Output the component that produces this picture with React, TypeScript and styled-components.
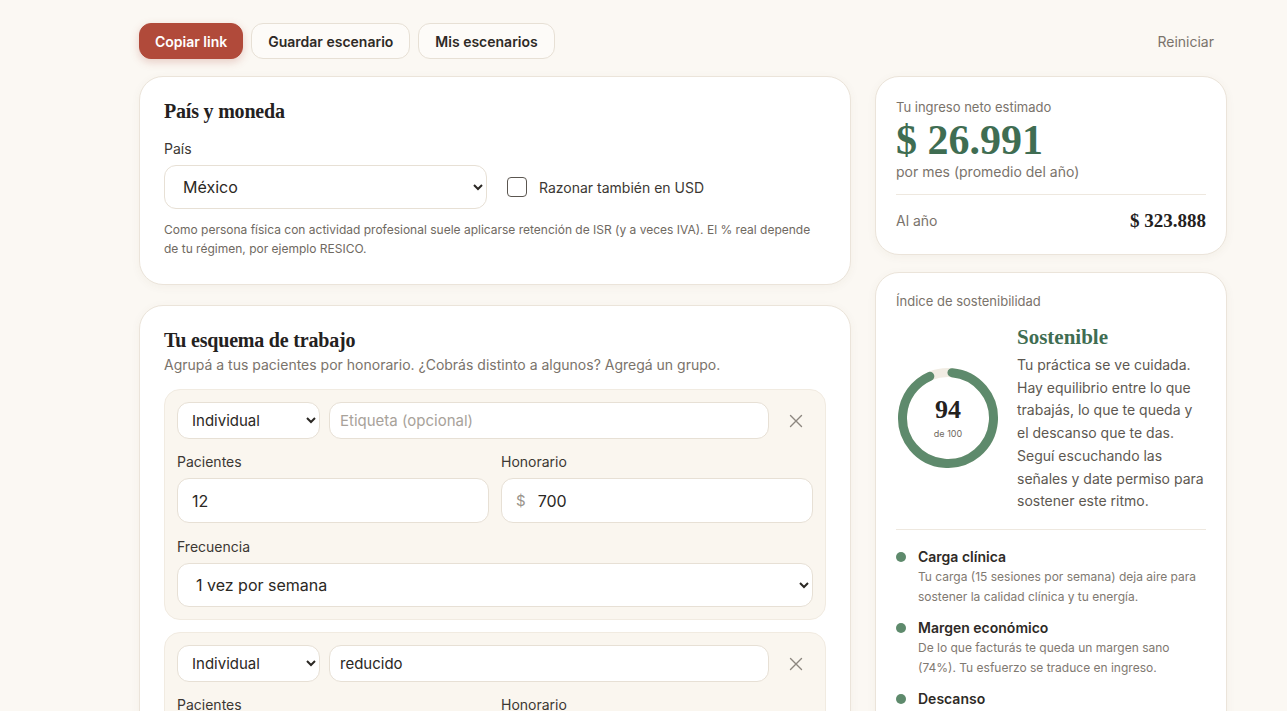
import React from 'react';
import styled, { createGlobalStyle } from 'styled-components';

const GlobalStyle = createGlobalStyle`
  * { box-sizing: border-box; }
  html, body { margin: 0; padding: 0; }
  body {
    background: #fbf8f3;
    font-family: Inter, 'Noto Sans', sans-serif;
    color: #2b2824;
  }
`;

const Page = styled.div`
  width: 1088px;
  margin-left: 139px;
  padding-top: 23px;
`;

const TopBar = styled.div`
  display: flex;
  align-items: center;
  gap: 8px;
  margin-bottom: 17px;
`;

const Btn = styled.button<{ $primary?: boolean }>`
  height: 36px;
  padding: 0 ${(p) => (p.$primary ? 15 : 16)}px;
  border-radius: 12px;
  font-family: Inter, sans-serif;
  font-size: 14px;
  font-weight: 600;
  cursor: pointer;
  border: 1px solid ${(p) => (p.$primary ? '#b14a3a' : '#e7e0d5')};
  background: ${(p) => (p.$primary ? '#b14a3a' : '#fdfbf8')};
  color: ${(p) => (p.$primary ? '#fff' : '#2e2a26')};
  box-shadow: ${(p) => (p.$primary ? '0 3px 8px rgba(177,74,58,0.25)' : 'none')};
`;

const GhostBtn = styled.button`
  margin-left: auto;
  height: 36px;
  padding: 0 13px;
  border: none;
  background: none;
  font-family: Inter, sans-serif;
  font-size: 14px;
  color: #7a736b;
`;

const Columns = styled.div`
  display: grid;
  grid-template-columns: 712px 352px;
  gap: 24px;
  align-items: start;
`;

const Stack = styled.div<{ $gap: number }>`
  display: flex;
  flex-direction: column;
  gap: ${(p) => p.$gap}px;
`;

const Card = styled.section<{ $pad?: string }>`
  background: #fff;
  border: 1px solid #ebe4da;
  border-radius: 24px;
  padding: ${(p) => p.$pad || '21px 24px 26px'};
  box-shadow: 0 2px 10px rgba(90, 70, 40, 0.05);
`;

const Heading = styled.h2`
  margin: 0;
  font-family: 'Liberation Serif', 'DejaVu Serif', serif;
  font-size: 20px;
  font-weight: 700;
  letter-spacing: -0.2px;
  color: #24211e;
  line-height: 26px;
`;

const Sub = styled.p`
  margin: 2px 0 14px;
  font-size: 14px;
  color: #7a736b;
  line-height: 20px;
`;

const Label = styled.div<{ $top?: number }>`
  font-size: 14px;
  color: #3c3833;
  margin-top: ${(p) => p.$top || 0}px;
  margin-bottom: 7px;
  line-height: 18px;
`;

const FieldRow = styled.div`
  display: flex;
  align-items: center;
  gap: 20px;
`;

const Select = styled.select<{ $w?: number; $h?: number; $fs?: number }>`
  width: ${(p) => (p.$w ? `${p.$w}px` : '100%')};
  height: ${(p) => p.$h || 44}px;
  border: 1px solid #e7e0d5;
  border-radius: 12px;
  background: #fff;
  padding: 0 10px 0 ${(p) => (p.$fs && p.$fs < 16 ? 10 : 14)}px;
  font-family: Inter, sans-serif;
  font-size: ${(p) => p.$fs || 16}px;
  color: #2b2824;
  outline: none;
`;

const CheckLabel = styled.label`
  display: flex;
  align-items: center;
  gap: 12px;
  font-size: 14px;
  color: #3c3833;
`;

const CheckBox = styled.span`
  width: 20px;
  height: 20px;
  border: 1.5px solid #5b5650;
  border-radius: 4px;
  background: #fff;
`;

const Note = styled.p`
  margin: 11px 0 0;
  font-size: 12px;
  line-height: 19px;
  color: #6f6961;
`;

const Group = styled.div`
  background: #faf6ef;
  border: 1px solid #f1ebe1;
  border-radius: 16px;
  padding: 12px;
  margin-bottom: 12px;
`;

const GroupHead = styled.div`
  display: flex;
  align-items: center;
  gap: 9px;
  margin-bottom: 14px;
`;

const TextInput = styled.input<{ $h?: number; $fs?: number; $pl?: number }>`
  flex: 1;
  min-width: 0;
  width: 100%;
  height: ${(p) => p.$h || 45}px;
  border: 1px solid #e7e0d5;
  border-radius: 12px;
  background: #fff;
  padding: 0 10px 0 ${(p) => p.$pl || 10}px;
  font-family: Inter, sans-serif;
  font-size: ${(p) => p.$fs || 16}px;
  color: #2b2824;
  outline: none;
  &::placeholder { color: #a8a29a; }
`;

const CloseBtn = styled.button`
  width: 35px;
  flex: none;
  height: 37px;
  border: none;
  background: none;
  display: flex;
  align-items: center;
  justify-content: center;
  color: #8d877f;
  padding: 0;
`;

const Grid2 = styled.div`
  display: grid;
  grid-template-columns: 1fr 1fr;
  gap: 12px;
  margin-bottom: 15px;
`;

const Money = styled.div`
  display: flex;
  align-items: center;
  height: 45px;
  border: 1px solid #e7e0d5;
  border-radius: 12px;
  background: #fff;
  padding: 0 14px;
  gap: 12px;
  font-size: 16px;
`;

const Prefix = styled.span`
  color: #9a948c;
  font-size: 15px;
`;

const Small = styled.div`
  font-size: 13px;
  color: #7a736b;
  line-height: 18px;
`;

const BigNum = styled.div`
  font-family: 'Liberation Serif', 'DejaVu Serif', serif;
  font-weight: 700;
  font-size: 42px;
  line-height: 46px;
  color: #3f6d52;
  margin-top: 1px;
`;

const Muted = styled.div`
  font-size: 14px;
  color: #7a736b;
  line-height: 18px;
`;

const Divider = styled.hr<{ $top?: number }>`
  border: none;
  border-top: 1px solid #eee8df;
  margin: ${(p) => p.$top ?? 13}px 0 0;
`;

const YearRow = styled.div`
  display: flex;
  justify-content: space-between;
  align-items: center;
  padding-top: 15px;
`;

const YearVal = styled.span`
  font-family: 'Liberation Serif', 'DejaVu Serif', serif;
  font-weight: 700;
  font-size: 19px;
  color: #24211e;
`;

const ScoreRow = styled.div`
  display: flex;
  align-items: center;
  gap: 18px;
  margin-top: 14px;
`;

const Ring = styled.div`
  position: relative;
  width: 102px;
  height: 102px;
  flex: none;
  margin-left: 1px;
`;

const RingCenter = styled.div`
  position: absolute;
  inset: 0;
  display: flex;
  flex-direction: column;
  align-items: center;
  justify-content: center;
`;

const RingNum = styled.div`
  font-family: 'Liberation Serif', 'DejaVu Serif', serif;
  font-weight: 700;
  font-size: 26px;
  line-height: 26px;
  color: #24211e;
`;

const RingOf = styled.div`
  font-size: 9px;
  color: #6f6961;
  margin-top: 5px;
`;

const ScoreTitle = styled.div`
  font-family: 'Liberation Serif', 'DejaVu Serif', serif;
  font-weight: 700;
  font-size: 21px;
  color: #3f6d52;
  line-height: 26px;
  margin-bottom: 4px;
`;

const ScoreText = styled.p`
  margin: 0;
  font-size: 14px;
  line-height: 22.7px;
  color: #5d5851;
`;

const List = styled.ul`
  list-style: none;
  margin: 17px 0 0;
  padding: 0;
  display: flex;
  flex-direction: column;
  gap: 11px;
`;

const Item = styled.li`
  position: relative;
  padding-left: 22px;
`;

const Dot = styled.span`
  position: absolute;
  left: 0;
  top: 5px;
  width: 10px;
  height: 10px;
  border-radius: 50%;
  background: #5e8a6c;
`;

const ItemTitle = styled.div`
  font-size: 14px;
  font-weight: 600;
  color: #2e2a26;
  line-height: 20px;
`;

const ItemText = styled.div`
  font-size: 12px;
  line-height: 20px;
  color: #7f7971;
`;

const XIcon = () => (
  <svg width="14" height="14" viewBox="0 0 14 14" fill="none" stroke="currentColor" strokeWidth="1.4" strokeLinecap="round">
    <path d="M1.5 1.5l11 11M12.5 1.5l-11 11" />
  </svg>
);

const ScoreRing = ({ value }: { value: number }) => {
  const r = 45.5;
  const c = 2 * Math.PI * r;
  return (
    <Ring>
      <svg width="102" height="102" viewBox="0 0 102 102">
        <circle cx="51" cy="51" r={r} fill="none" stroke="#f1ece3" strokeWidth="9" />
        <circle
          cx="51"
          cy="51"
          r={r}
          fill="none"
          stroke="#5e8a6c"
          strokeWidth="9"
          strokeLinecap="round"
          strokeDasharray={`${(c * value) / 100 - 6} ${c}`}
          transform="rotate(-85 51 51)"
        />
      </svg>
      <RingCenter>
        <RingNum>{value}</RingNum>
        <RingOf>de 100</RingOf>
      </RingCenter>
    </Ring>
  );
};

const WorkGroup = ({ label, last }: { label?: string; last?: boolean }) => (
  <Group>
    <GroupHead>
      <Select $w={143} $h={37} $fs={15} defaultValue="Individual">
        <option>Individual</option>
        <option>Pareja</option>
        <option>Grupal</option>
      </Select>
      <TextInput $h={37} $fs={15} placeholder="Etiqueta (opcional)" defaultValue={label} />
      <CloseBtn aria-label="Quitar">
        <XIcon />
      </CloseBtn>
    </GroupHead>
    <Grid2>
      <div>
        <Label>Pacientes</Label>
        <TextInput defaultValue="12" $pl={14} />
      </div>
      <div>
        <Label>Honorario</Label>
        <Money>
          <Prefix>$</Prefix>
          <span>700</span>
        </Money>
      </div>
    </Grid2>
    {!last && (
      <>
        <Label>Frecuencia</Label>
        <Select defaultValue="1 vez por semana">
          <option>1 vez por semana</option>
          <option>Cada 15 días</option>
        </Select>
      </>
    )}
  </Group>
);

export default function App() {
  return (
    <>
      <GlobalStyle />
      <Page>
        <TopBar>
          <Btn $primary>Copiar link</Btn>
          <Btn>Guardar escenario</Btn>
          <Btn>Mis escenarios</Btn>
          <GhostBtn>Reiniciar</GhostBtn>
        </TopBar>
        <Columns>
          <Stack $gap={20}>
            <Card>
              <Heading>País y moneda</Heading>
              <Label $top={16}>País</Label>
              <FieldRow>
                <Select $w={323} defaultValue="México">
                  <option>México</option>
                  <option>Argentina</option>
                </Select>
                <CheckLabel>
                  <CheckBox />
                  Razonar también en USD
                </CheckLabel>
              </FieldRow>
              <Note>
                Como persona física con actividad profesional suele aplicarse retención de ISR (y a veces IVA). El %
                real depende de tu régimen, por ejemplo RESICO.
              </Note>
            </Card>
            <Card>
              <Heading>Tu esquema de trabajo</Heading>
              <Sub>Agrupá a tus pacientes por honorario. ¿Cobrás distinto a algunos? Agregá un grupo.</Sub>
              <WorkGroup />
              <WorkGroup label="reducido" last />
            </Card>
          </Stack>
          <Stack $gap={17}>
            <Card $pad="21px 20px 22px">
              <Small>Tu ingreso neto estimado</Small>
              <BigNum>$ 26.991</BigNum>
              <Muted>por mes (promedio del año)</Muted>
              <Divider />
              <YearRow>
                <Muted>Al año</Muted>
                <YearVal>$ 323.888</YearVal>
              </YearRow>
            </Card>
            <Card $pad="19px 20px 20px">
              <Small>Índice de sostenibilidad</Small>
              <ScoreRow>
                <ScoreRing value={94} />
                <div>
                  <ScoreTitle>Sostenible</ScoreTitle>
                  <ScoreText>
                    Tu práctica se ve cuidada. Hay equilibrio entre lo que trabajás, lo que te queda y el descanso que te
                    das. Seguí escuchando las señales y date permiso para sostener este ritmo.
                  </ScoreText>
                </div>
              </ScoreRow>
              <Divider $top={16} />
              <List>
                <Item>
                  <Dot />
                  <ItemTitle>Carga clínica</ItemTitle>
                  <ItemText>Tu carga (15 sesiones por semana) deja aire para sostener la calidad clínica y tu energía.</ItemText>
                </Item>
                <Item>
                  <Dot />
                  <ItemTitle>Margen económico</ItemTitle>
                  <ItemText>De lo que facturás te queda un margen sano (74%). Tu esfuerzo se traduce en ingreso.</ItemText>
                </Item>
                <Item>
                  <Dot />
                  <ItemTitle>Descanso</ItemTitle>
                  <ItemText>Tus vacaciones y feriados te dan pausas reales a lo largo del año.</ItemText>
                </Item>
              </List>
            </Card>
          </Stack>
        </Columns>
      </Page>
    </>
  );
}
